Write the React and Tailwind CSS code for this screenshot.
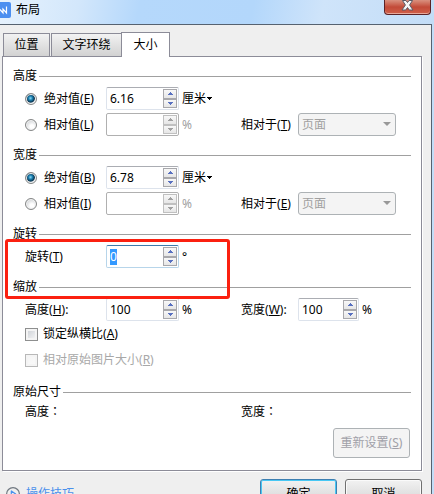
import React, { useEffect, useRef, useState } from "react";

const rowGrid = "grid grid-cols-[81px_73px_62px_57px_1fr] items-center h-[23px] pl-3";

function Key({ text, k, end = "" }) {
  return (
    <>
      {text}(<u>{k}</u>){end}
    </>
  );
}

function Group({ title, children }) {
  return (
    <section className="relative">
      <div className="flex items-center gap-[2px] h-[22px]">
        <h2>{title}</h2>
        <span className="flex-1 h-px bg-[#a0a0a0]" />
      </div>
      {children}
    </section>
  );
}

function StepButton({ up, disabled, onClick }) {
  return (
    <button
      type="button"
      aria-label={up ? "增加" : "减少"}
      disabled={disabled}
      onClick={onClick}
      className="flex flex-1 items-center justify-center border border-[#a8a8ac] bg-gradient-to-b from-[#f8f8f8] to-[#e6e6e6] disabled:border-[#c0c0c0]"
    >
      <svg width="5" height="3" viewBox="0 0 5 3" shapeRendering="crispEdges">
        <path
          d={up ? "M2 0h1v1h1v1h1v1h-5v-1h1v-1h1z" : "M0 0h5v1h-1v1h-1v1h-1v-1h-1v-1h-1z"}
          fill={disabled ? "#a0a0a0" : "#5870c0"}
        />
      </svg>
    </button>
  );
}

function Spinner({ id, label, initial, step = 1, disabled, selected }) {
  const [value, setValue] = useState(initial);
  const ref = useRef(null);

  useEffect(() => {
    if (selected) {
      ref.current.focus();
      ref.current.select();
    }
  }, [selected]);

  const change = (by) => {
    const next = Number(value) + by;
    setValue(String(Math.round(next * 100) / 100));
  };

  return (
    <div
      className={
        "flex h-[23px] rounded-[2px] border py-[1px] pr-[1px] " +
        (disabled
          ? "border-[#b0b0b0] bg-white"
          : selected
            ? "border-[#b7d5ea] border-t-[#3d7bad] bg-white"
            : "border-[#dde3ec] border-t-[#abadb3] bg-white")
      }
    >
      <input
        id={id}
        aria-label={label}
        ref={ref}
        type="text"
        value={value}
        disabled={disabled}
        onChange={(e) => setValue(e.target.value)}
        className="w-0 flex-1 pl-[3px] leading-4 outline-none selection:bg-[#3399ff] selection:text-white"
      />
      <div className="flex w-[14px] flex-col">
        <StepButton up disabled={disabled} onClick={() => change(step)} />
        <StepButton disabled={disabled} onClick={() => change(-step)} />
      </div>
    </div>
  );
}

function Radio({ name, checked, onChange, children }) {
  return (
    <label className="flex items-center gap-[7px]">
      <input
        type="radio"
        name={name}
        checked={checked}
        onChange={onChange}
        className="size-3 shrink-0 appearance-none rounded-full border border-[#848686] bg-[radial-gradient(circle_at_60%_65%,#fff_20%,#cfd2d5_75%)] ring-1 ring-inset ring-[#f4f4f4] checked:bg-[radial-gradient(circle_at_45%_42%,#8fdcf5_0px,#1b7fb0_2px,#0b3550_4px,#e6eaee_5px)]"
      />
      <span>{children}</span>
    </label>
  );
}

function PageSelect({ id }) {
  return (
    <div className="relative w-[98px]">
      <select
        id={id}
        disabled
        className="block h-[23px] w-full appearance-none rounded-[3px] border border-[#adb2b5] bg-[#f4f4f4] pl-[3px] leading-4 text-[#a0a0a0] opacity-100"
      >
        <option>页面</option>
      </select>
      <svg className="pointer-events-none absolute right-[5px] top-[9px]" width="8" height="4" viewBox="0 0 8 4">
        <path d="M0 0h8L4 4z" fill="#989898" />
      </svg>
    </div>
  );
}

function SizeGroup({ title, name, value, absKey, relKey, toKey }) {
  const [mode, setMode] = useState("abs");

  return (
    <Group title={title}>
      <div className="flex flex-col gap-[3px]">
        <div className={rowGrid}>
          <Radio name={name} checked={mode === "abs"} onChange={() => setMode("abs")}>
            <Key text="绝对值" k={absKey} />
          </Radio>
          <Spinner label={title + "绝对值"} initial={value} step={0.1} />
          <button type="button" className="flex items-center gap-px pl-[3px]">
            厘米
            <svg width="5" height="3" viewBox="0 0 5 3" shapeRendering="crispEdges">
              <path d="M0 0h5v1h-1v1h-1v1h-1v-1h-1v-1h-1z" fill="#000" />
            </svg>
          </button>
        </div>
        <div className={rowGrid}>
          <Radio name={name} checked={mode === "rel"} onChange={() => setMode("rel")}>
            <Key text="相对值" k={relKey} />
          </Radio>
          <Spinner label={title + "相对值"} initial="" disabled />
          <span className="pl-[3px] text-[#a0a0a0]">%</span>
          <label htmlFor={name + "-to"}>
            <Key text="相对于" k={toKey} />
          </label>
          <PageSelect id={name + "-to"} />
        </div>
      </div>
    </Group>
  );
}

function Check({ disabled, children }) {
  return (
    <label className={"flex h-[26px] items-center gap-[5px] pl-3 " + (disabled ? "text-[#a8a8a8]" : "")}>
      <input
        type="checkbox"
        disabled={disabled}
        className="size-[13px] appearance-none border border-[#8e8f8f] bg-gradient-to-br from-[#c8ccd2] to-[#fafafa] ring-2 ring-inset ring-[#f4f4f4] checked:from-[#2a5a9a] disabled:border-[#b8b8b8] disabled:from-[#f4f4f4]"
      />
      <span>{children}</span>
    </label>
  );
}

function Colon() {
  return <span className="font-['Noto_Sans_CJK_TC',sans-serif]">：</span>;
}

function App() {
  return (
    <div className="flex h-screen flex-col overflow-hidden bg-[#c3ddf7] pr-[2px] font-['Noto_Sans','Noto_Sans_CJK_SC',sans-serif] text-[12px] leading-4 text-black">
      <header className="-mr-[2px] flex h-6 shrink-0 items-start justify-between bg-[linear-gradient(100deg,#e6f2fd_0%,#d3e7fb_18%,#b5d8fb_32%,#b3d7fb_58%,#cfe4fa_74%,#c3ddf7_100%)] pr-[3px]">
        <div className="flex h-5 items-center gap-[5px]">
          <svg width="11" height="16" viewBox="0 0 11 16">
            <path d="M0 0h9a2 2 0 0 1 2 2v12a2 2 0 0 1-2 2H0z" fill="#4b8ff0" />
            <path d="M0 7.500L3 11V7L6.500 11V4.500" fill="none" stroke="#fff" strokeWidth="1.200" />
          </svg>
          <h1>布局</h1>
        </div>
        <button
          type="button"
          aria-label="关闭"
          className="flex h-[15px] w-[47px] items-start justify-center rounded-b-[4px] border border-t-0 border-[#5b2226] bg-gradient-to-b from-[#d9907f] via-[#c24a38] to-[#d0604a] shadow-[inset_0_-1px_0_#e8a89a]"
        >
          <svg width="13" height="11" viewBox="0 0 13 11">
            <path d="M1.500 0.500H4.900L6.500 2.500 8.100 0.500H11.500L8.600 5 12 10H8.300L6.500 7.500 4.700 10H1L4.400 5z" fill="#f5f5f5" stroke="#5a5a66" />
          </svg>
        </button>
      </header>

      <main className="flex-1 border-r border-t border-[#566270] bg-[#efefef] pl-[2px] pr-[9px] pt-[7px]">
        <div role="tablist" className="flex h-6 items-end pl-px">
          <button
            type="button"
            role="tab"
            aria-selected="false"
            className="h-[23px] w-[47px] border border-b-0 border-[#8c8c98] bg-gradient-to-b from-[#f2f2f2] to-[#d2d2d2]"
          >
            位置
          </button>
          <button
            type="button"
            role="tab"
            aria-selected="false"
            className="ml-px h-[23px] w-[70px] border border-b-0 border-r-0 border-[#8c8c98] bg-gradient-to-b from-[#f2f2f2] to-[#d2d2d2]"
          >
            文字环绕
          </button>
          <button
            type="button"
            role="tab"
            aria-selected="true"
            className="relative z-10 -mb-px h-[25px] w-[49px] border border-b-0 border-[#8c8c98] bg-white"
          >
            大小
          </button>
        </div>

        <div className="flex flex-col gap-2 border border-[#8c8c98] bg-white px-[10px] pb-3 pt-2 shadow-[1px_1px_0_#fff]">
          <SizeGroup title="高度" name="height" value="6.16" absKey="E" relKey="L" toKey="T" />
          <SizeGroup title="宽度" name="width" value="6.78" absKey="B" relKey="I" toKey="E" />

          <Group title="旋转">
            <div className={rowGrid}>
              <label htmlFor="rotate">
                <Key text="旋转" k="T" />
              </label>
              <Spinner id="rotate" initial="0" selected />
              <span className="pl-[3px]">°</span>
            </div>
            {/* red marker around the rotation row */}
            <div className="pointer-events-none absolute -left-2 top-4 z-10 h-[60px] w-[225px] rounded-[3px] border-3 border-[#fb2010]" />
          </Group>

          <Group title="缩放">
            <div className={rowGrid}>
              <label htmlFor="scale-h">
                <Key text="高度" k="H" end=":" />
              </label>
              <Spinner id="scale-h" initial="100" />
              <span className="pl-[3px]">%</span>
              <label htmlFor="scale-w">
                <Key text="宽度" k="W" end=":" />
              </label>
              <div className="flex items-center gap-[3px]">
                <div className="w-[61px]">
                  <Spinner id="scale-w" initial="100" />
                </div>
                <span>%</span>
              </div>
            </div>
            <Check>
              <Key text="锁定纵横比" k="A" />
            </Check>
            <Check disabled>
              <Key text="相对原始图片大小" k="R" />
            </Check>
          </Group>

          <Group title="原始尺寸">
            <div className="grid grid-cols-[216px_1fr] pl-3">
              <span>
                高度
                <Colon />
              </span>
              <span>
                宽度
                <Colon />
              </span>
            </div>
            <div className="flex justify-end pr-px pt-2">
              <button
                type="button"
                disabled
                className="h-[30px] w-[77px] rounded-[3px] border border-[#adb2b5] bg-[#f4f4f4] text-[#a0a0a8]"
              >
                <Key text="重新设置" k="S" />
              </button>
            </div>
          </Group>
        </div>

        <footer className="flex items-center justify-between pl-1 pt-2">
          <a href="#tips" className="flex items-center gap-[6px] text-[#4a90ec]">
            <svg width="14" height="14" viewBox="0 0 14 14" fill="none">
              <circle cx="7" cy="7" r="6.400" stroke="#707880" strokeWidth="1.200" />
              <path d="M5.300 4v6.200l4.400-3.100z" stroke="#4a90ec" strokeWidth="1.200" strokeLinejoin="round" />
            </svg>
            操作技巧
          </a>
          <div className="flex gap-2">
            <button
              type="button"
              className="h-[30px] w-[77px] rounded-[3px] border border-[#3c7fb1] bg-gradient-to-b from-[#f2f2f2] to-[#cfcfcf] shadow-[inset_0_0_0_1px_#48c8f4]"
            >
              确定
            </button>
            <button
              type="button"
              className="h-[30px] w-[77px] rounded-[3px] border border-[#707070] bg-gradient-to-b from-[#f2f2f2] to-[#cfcfcf] shadow-[inset_0_0_0_1px_#fafafa]"
            >
              取消
            </button>
          </div>
        </footer>
      </main>
    </div>
  );
}

export default App;
